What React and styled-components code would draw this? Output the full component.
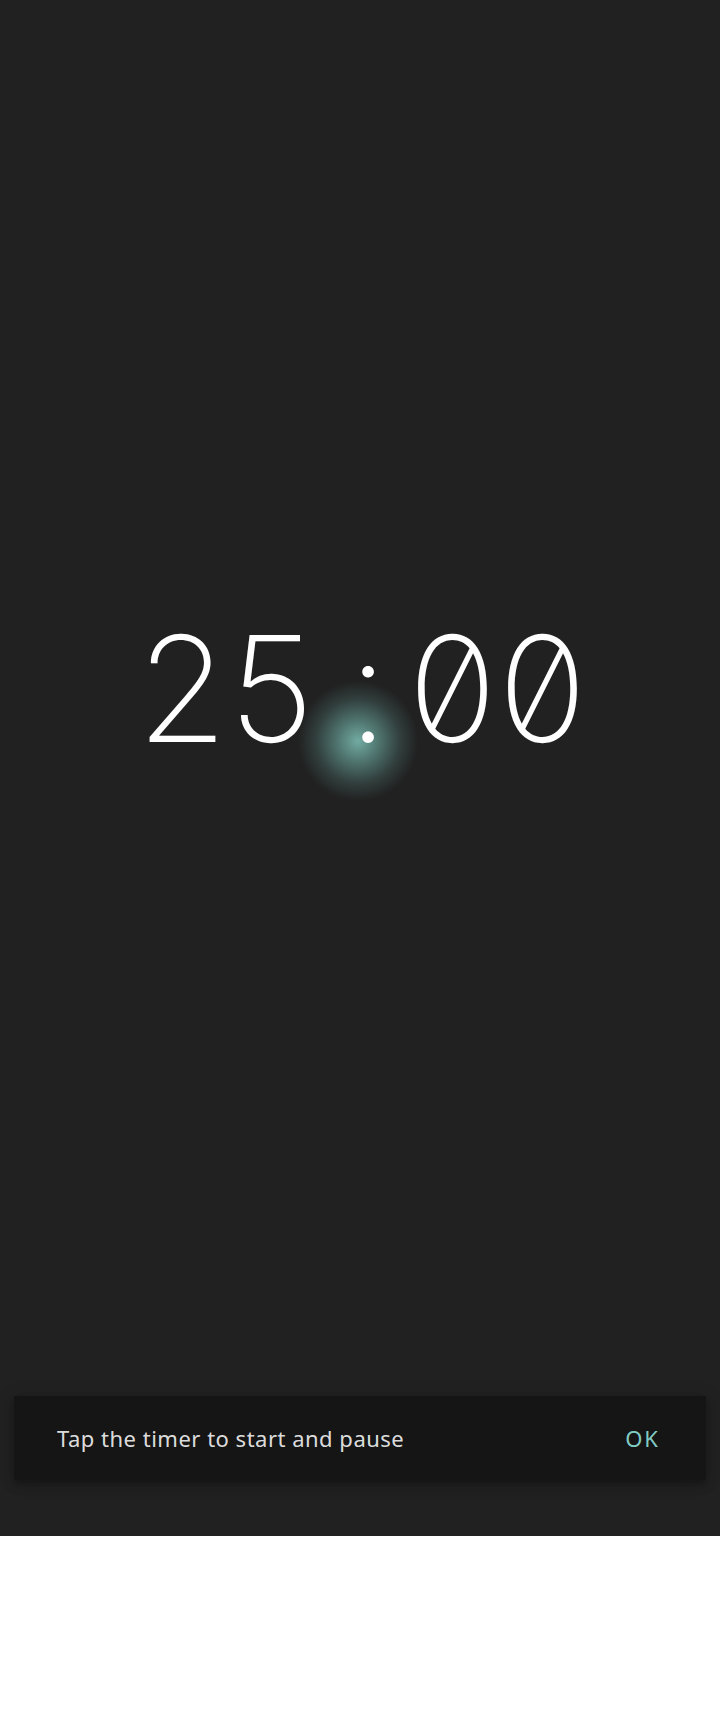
import styled, { createGlobalStyle } from "styled-components"

const GlobalStyle = createGlobalStyle`
  body {
    margin: 0;
    background: #fff;
    font-family: "Noto Sans", "Liberation Sans", sans-serif;
  }
`

const Screen = styled.div`
  height: 1536px;
  background-color: #212121;
  display: flex;
  flex-direction: column;
`

const TimerArea = styled.main`
  flex: 1;
  display: flex;
  align-items: center;
  justify-content: center;
  padding-bottom: 20px;
`

const Timer = styled.button`
  position: relative;
  display: flex;
  padding: 0;
  border: 0;
  background: none;
  cursor: pointer;
  font-family: "Inter", "Roboto", sans-serif;
  font-weight: 200;
  font-size: 147px;
  line-height: 1;
  color: #fff;
  font-feature-settings: "zero" 1, "tnum" 1;
`

const Cell = styled.span`
  position: relative;
  width: 90px;
  text-align: center;
  z-index: 1;
  left: ${(p) => p.$shift || 0}px;
`

// touch ripple left behind on the colon
const Ripple = styled.span`
  position: absolute;
  left: 163px;
  top: 66px;
  width: 120px;
  height: 120px;
  border-radius: 50%;
  background: radial-gradient(
    circle closest-side,
    rgba(122, 186, 176, 0.9) 0%,
    rgba(104, 160, 152, 0.65) 35%,
    rgba(80, 120, 115, 0.35) 70%,
    rgba(33, 33, 33, 0) 100%
  );
  z-index: 0;
`

const Snackbar = styled.div`
  margin: 0 14px 56px;
  height: 84px;
  padding: 0 46px 0 43px;
  display: flex;
  align-items: center;
  justify-content: space-between;
  background-color: #151515;
  box-shadow: 0 3px 5px -1px rgba(0, 0, 0, 0.2), 0 6px 10px rgba(0, 0, 0, 0.14),
    0 1px 18px rgba(0, 0, 0, 0.12);
`

const Message = styled.span`
  font-size: 22px;
  letter-spacing: 0.5px;
  color: rgba(255, 255, 255, 0.87);
`

const Action = styled.button`
  padding: 0;
  border: 0;
  background: none;
  font-family: "Noto Sans", "Liberation Sans", sans-serif;
  font-size: 22px;
  letter-spacing: 2px;
  color: #80cbc4;
  cursor: pointer;
`

export default function App() {
  const chars = ["2", "5", ":", "0", "0"]
  return (
    <>
      <GlobalStyle />
      <Screen>
        <TimerArea>
          <Timer>
            <Ripple />
            {chars.map((c, i) => (
              <Cell key={i} $shift={c === ":" ? 8 : 0}>
                {c}
              </Cell>
            ))}
          </Timer>
        </TimerArea>
        <Snackbar>
          <Message>Tap the timer to start and pause</Message>
          <Action>OK</Action>
        </Snackbar>
      </Screen>
    </>
  )
}
